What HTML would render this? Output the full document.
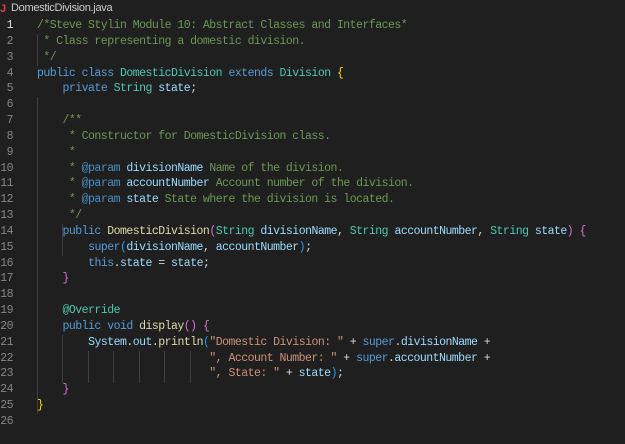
<!DOCTYPE html><html><head><style>
body{margin:0;width:625px;height:444px;background:#1f1f1f;overflow:hidden;position:relative}
.tab{position:absolute;left:11px;top:2px;font:11px "Liberation Sans",sans-serif;color:#cccccc;letter-spacing:-0.3px}
.j{position:absolute;left:0;top:3px;font:bold 11px "Liberation Sans",sans-serif;color:#e04040}
.ln{position:absolute;left:0;width:13px;text-align:right;font:11.5px "Liberation Mono",monospace;letter-spacing:-0.5px;color:#858585;height:15.84px;line-height:15.84px}
.c{position:absolute;left:37px;font:11.5px "Liberation Mono",monospace;letter-spacing:-0.52px;color:#d4d4d4;white-space:pre;height:15.84px;line-height:15.84px}
.g{position:absolute;width:1px;background:#404040}
.cm{color:#6a9955}.k{color:#569cd6}.t{color:#4ec9b0}.v{color:#9cdcfe}.f{color:#dcdcaa}.s{color:#ce9178}.y{color:#ffd700}.p{color:#da70d6}.b{color:#179fff}.cs{color:#4b8ec4}
</style></head><body>
<div class="j">J</div><div class="tab">DomesticDivision.java</div>
<div class="g" style="left:37px;top:34px;height:32px"></div>
<div class="g" style="left:37px;top:97px;height:317px"></div>
<div class="g" style="left:62px;top:224px;height:32px"></div>
<div class="g" style="left:62px;top:335px;height:48px"></div>
<div class="g" style="left:88px;top:351px;height:32px"></div>
<div class="g" style="left:113px;top:351px;height:32px"></div>
<div class="g" style="left:139px;top:351px;height:32px"></div>
<div class="g" style="left:164px;top:351px;height:32px"></div>
<div class="g" style="left:190px;top:351px;height:32px"></div>
<script>
var L=[
'<span class="cm">/*Steve Stylin Module 10: Abstract Classes and Interfaces*</span>',
'<span class="cm"> * Class representing a domestic division.</span>',
'<span class="cm"> */</span>',
'<span class="k">public class</span> <span class="t">DomesticDivision</span> <span class="k">extends</span> <span class="t">Division</span> <span class="y">{</span>',
'    <span class="k">private</span> <span class="t">String</span> <span class="v">state</span>;',
'',
'    <span class="cm">/**</span>',
'<span class="cm">     * Constructor for DomesticDivision class.</span>',
'<span class="cm">     *</span>',
'<span class="cm">     * </span><span class="cs">@param</span> <span class="v">divisionName</span><span class="cm"> Name of the division.</span>',
'<span class="cm">     * </span><span class="cs">@param</span> <span class="v">accountNumber</span><span class="cm"> Account number of the division.</span>',
'<span class="cm">     * </span><span class="cs">@param</span> <span class="v">state</span><span class="cm"> State where the division is located.</span>',
'<span class="cm">     */</span>',
'    <span class="k">public</span> <span class="f">DomesticDivision</span><span class="p">(</span><span class="t">String</span> <span class="v">divisionName</span>, <span class="t">String</span> <span class="v">accountNumber</span>, <span class="t">String</span> <span class="v">state</span><span class="p">)</span> <span class="p">{</span>',
'        <span class="k">super</span><span class="b">(</span><span class="v">divisionName</span>, <span class="v">accountNumber</span><span class="b">)</span>;',
'        <span class="k">this</span>.<span class="v">state</span> = <span class="v">state</span>;',
'    <span class="p">}</span>',
'',
'    <span class="t">@Override</span>',
'    <span class="k">public void</span> <span class="f">display</span><span class="p">()</span> <span class="p">{</span>',
'        <span class="v">System</span>.<span class="v">out</span>.<span class="f">println</span><span class="b">(</span><span class="s">"Domestic Division: "</span> + <span class="k">super</span>.<span class="v">divisionName</span> +',
'                           <span class="s">", Account Number: "</span> + <span class="k">super</span>.<span class="v">accountNumber</span> +',
'                           <span class="s">", State: "</span> + <span class="v">state</span><span class="b">)</span>;',
'    <span class="p">}</span>',
'<span class="y">}</span>',
''];
var h='';
for(var i=0;i<26;i++){var t=(18+i*15.84).toFixed(2);
h+='<div class="ln" style="top:'+t+'px'+(i==0?';color:#e0e0e0':'')+'">'+(i+1)+'</div><div class="c" style="top:'+t+'px">'+L[i]+'</div>';}
document.write(h);
</script>
</body></html>
